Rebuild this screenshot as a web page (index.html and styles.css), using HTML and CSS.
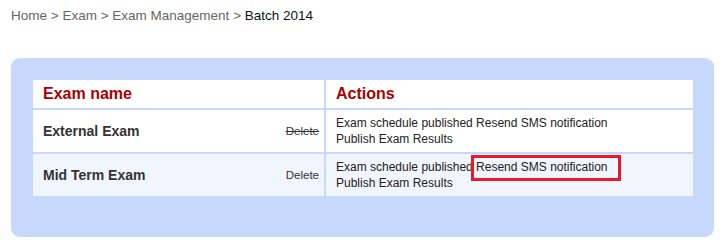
FILE: index.html
```html
<!DOCTYPE html>
<html lang="en">
<head>
    <meta charset="UTF-8">
    <title>Batch 2014</title>
    <link rel="stylesheet" href="styles.css">
</head>
<body>
    <div class="breadcrumb">
        <a href="#">Home</a> &gt; <a href="#">Exam</a> &gt; <a href="#">Exam Management</a> &gt; <span class="current">Batch 2014</span>
    </div>

    <div class="panel">
        <table class="exam-table">
            <tr>
                <th class="col-name">Exam name</th>
                <th class="col-actions">Actions</th>
            </tr>
            <tr>
                <td class="name-cell">
                    <div class="name-wrap">
                        <span class="exam-name">External Exam</span>
                        <a href="#" class="delete deleted">Delete</a>
                    </div>
                </td>
                <td class="actions-cell">
                    <a href="#">Exam schedule published</a> <a href="#">Resend SMS notification</a><br>
                    <a href="#">Publish Exam Results</a>
                </td>
            </tr>
            <tr class="alt">
                <td class="name-cell">
                    <div class="name-wrap">
                        <span class="exam-name">Mid Term Exam</span>
                        <a href="#" class="delete">Delete</a>
                    </div>
                </td>
                <td class="actions-cell">
                    <a href="#">Exam schedule published</a> <a href="#" class="marked">Resend SMS notification</a><br>
                    <a href="#">Publish Exam Results</a>
                </td>
            </tr>
        </table>
    </div>
</body>
</html>
```

FILE: styles.css
```css
body {
    margin: 0;
    background-color: #ffffff;
    font-family: "Liberation Sans", Arial, sans-serif;
    color: #222222;
}

a {
    color: inherit;
    text-decoration: none;
}

.breadcrumb {
    padding: 8px 11px 0;
    font-size: 13.5px;
    line-height: 16px;
    color: #666666;
}

.breadcrumb .current {
    color: #111111;
}

.panel {
    margin: 34px 12px 0 11px;
    padding: 20px 19px 39px 20px;
    background-color: #c6d9fc;
    border-radius: 9px;
}

.exam-table {
    width: 100%;
    border-collapse: separate;
    border-spacing: 2px;
    background-color: #c6d9fc;
}

.exam-table th {
    background-color: #ffffff;
    color: #a80000;
    font-size: 16px;
    font-weight: bold;
    text-align: left;
    height: 28px;
    padding: 0 10px;
}

.col-name {
    width: 271px;
}

.exam-table td {
    background-color: #ffffff;
    height: 42px;
    vertical-align: middle;
}

.exam-table tr.alt td {
    background-color: #f0f5fe;
}

.name-cell {
    padding: 0 5px 0 10px;
}

.name-wrap {
    display: flex;
    justify-content: space-between;
    align-items: center;
}

.exam-name {
    font-size: 14px;
    font-weight: bold;
    color: #333333;
}

.delete {
    font-size: 11.5px;
    color: #333333;
}

.delete.deleted {
    text-decoration: line-through;
}

.actions-cell {
    padding: 0 10px;
    font-size: 12px;
    line-height: 16px;
    color: #222222;
}

/* highlight round the resend link */
.marked {
    position: relative;
}

.marked::after {
    content: "";
    position: absolute;
    left: -5px;
    right: -13px;
    top: -5px;
    bottom: -7px;
    border: 3px solid #e8192b;
}
```
